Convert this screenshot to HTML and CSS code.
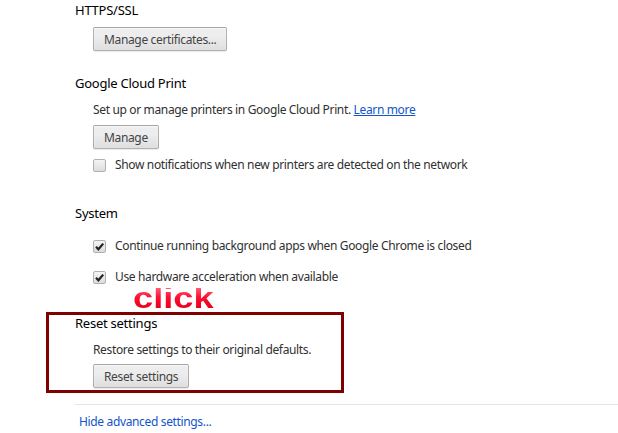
FILE: index.html
```html
<!DOCTYPE html>
<html>
    <head>
        <title>Settings</title>
        <link rel="stylesheet" href="styles.css">
    </head>
    <body>

        <div class="settings">
            <section class="section">
                <h3 class="title">HTTPS/SSL</h3>
                <div class="body">
                    <button class="btn btn-first">Manage certificates...</button>
                </div>
            </section>

            <section class="section cloud">
                <h3 class="title">Google Cloud Print</h3>
                <div class="body">
                    <p class="text">Set up or manage printers in Google Cloud Print. <a href="#" class="link">Learn more</a></p>
                    <button class="btn">Manage</button>
                    <label class="check">
                        <span class="box"></span>
                        Show notifications when new printers are detected on the network
                    </label>
                </div>
            </section>

            <section class="section system">
                <h3 class="title">System</h3>
                <div class="body">
                    <label class="check">
                        <span class="box checked">
                            <svg viewBox="0 0 13 13" width="13" height="13"><path d="M3 6.8 L5.4 9.3 L10.2 3.6" /></svg>
                        </span>
                        Continue running background apps when Google Chrome is closed
                    </label>
                    <label class="check">
                        <span class="box checked">
                            <svg viewBox="0 0 13 13" width="13" height="13"><path d="M3 6.8 L5.4 9.3 L10.2 3.6" /></svg>
                        </span>
                        Use hardware acceleration when available
                    </label>
                </div>
            </section>

            <section class="section reset">
                <h3 class="title">Reset settings</h3>
                <div class="body">
                    <p class="text">Restore settings to their original defaults.</p>
                    <button class="btn">Reset settings</button>
                </div>
            </section>

            <div class="footer">
                <a href="#" class="link">Hide advanced settings...</a>
            </div>
        </div>

        <!-- red frame and label drawn on top of the reset block -->
        <div class="frame"></div>
        <div class="hint">click</div>

    </body>
</html>
```

FILE: styles.css
```css
body{
    font-family: "Noto Sans", sans-serif;
    font-size: 12px;
    letter-spacing: -0.35px;
    color: #303030;
    background-color: #fff;

    margin: 0;
    padding: 0;
}

.settings{
    padding-left: 75px;
}

.section{
    margin-top: 22px;
}

.section:first-child{
    margin-top: 0;
}

.section.system{
    margin-top: 28px;
}

.section.reset{
    margin-top: 26px;
}

.title{
    margin: 0;
    font-size: 13px;
    font-weight: normal;
    letter-spacing: -0.25px;
    line-height: 20px;
    color: #000;
}

.body{
    padding-left: 18px;
}

.text{
    margin: 7px 0 0;
    line-height: 20px;
}

.link{
    color: #15c;
}

.btn{
    display: block;
    height: 24px;
    padding: 0 10px;
    margin-top: 5px;

    font-family: inherit;
    font-size: 12px;
    letter-spacing: inherit;
    color: #444;

    border: 1px solid rgba(0,0,0,0.25);
    border-radius: 2px;
    background: linear-gradient(#ededed, #ededed 38%, #dedede);
    box-shadow: 0 1px 0 rgba(0,0,0,0.08), inset 0 1px 2px rgba(255,255,255,0.75);
}

.btn-first{
    margin-top: 7px;
}

.reset .btn{
    margin-top: 4px;
}

.check{
    display: flex;
    align-items: center;
    gap: 9px;
    line-height: 20px;
    margin-top: 6px;
}

.system .check{
    margin-top: 11px;
}

.system .check:first-child{
    margin-top: 13px;
}

.box{
    width: 11px;
    height: 11px;
    flex: none;
    position: relative;

    border: 1px solid #b0b0b0;
    border-radius: 2px;
    background: linear-gradient(#f4f4f4, #dcdcdc);
}

.box svg{
    position: absolute;
    left: -1px;
    top: -1px;
}

.box svg path{
    fill: none;
    stroke: #222;
    stroke-width: 2.2;
}

.footer{
    margin-top: 16px;
    border-top: 1px solid #e5e5e5;
    padding: 7px 0 0 4px;
    line-height: 20px;
}

.footer .link{
    text-decoration: none;
}

.frame{
    position: absolute;
    left: 46px;
    top: 312px;
    width: 292px;
    height: 75px;
    border: 3px solid #800000;
}

.hint{
    position: absolute;
    left: 133px;
    top: 288px;

    font-family: "Liberation Sans", sans-serif;
    font-weight: bold;
    font-size: 29px;
    letter-spacing: 0;
    line-height: 20px;

    transform: scaleX(1.25);
    transform-origin: left;

    background: linear-gradient(#ff5a78, #ff1030 45%, #e8001c);
    -webkit-background-clip: text;
    background-clip: text;
    color: transparent;
}
```
